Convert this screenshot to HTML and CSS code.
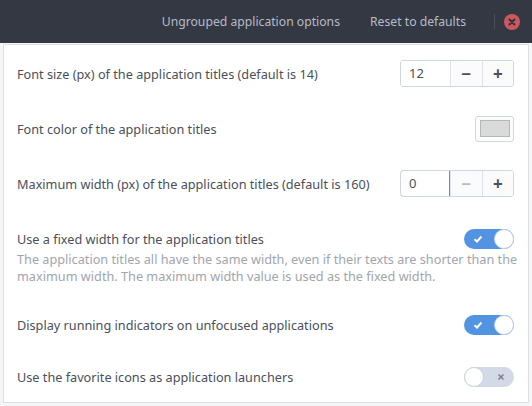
FILE: index.html
```html
<!DOCTYPE html>
<html lang="en">
<head>
    <meta charset="UTF-8">
    <title>Ungrouped application options</title>
    <link rel="stylesheet" href="styles.css">
</head>
<body>
    <div class="window">
        <header class="headerbar">
            <button class="hb-button">Ungrouped application options</button>
            <button class="hb-button">Reset to defaults</button>
            <span class="hb-separator"></span>
            <span class="hb-close">
                <svg width="16" height="16" viewBox="0 0 16 16">
                    <circle cx="8" cy="8" r="8" fill="#cc575d"/>
                    <path d="M5.5 5.5 L10.5 10.5 M10.5 5.5 L5.5 10.5" stroke="#2f343f" stroke-width="2" stroke-linecap="round"/>
                </svg>
            </span>
        </header>

        <div class="content">
            <div class="frame">
                <div class="row">
                    <div class="line">
                        <span class="title">Font size (px) of the application titles (default is 14)</span>
                        <div class="spin">
                            <span class="spin-entry">12</span>
                            <span class="spin-btn">&minus;</span>
                            <span class="spin-btn">+</span>
                        </div>
                    </div>
                </div>

                <div class="row">
                    <div class="line">
                        <span class="title">Font color of the application titles</span>
                        <span class="color-btn"><span class="swatch"></span></span>
                    </div>
                </div>

                <div class="row">
                    <div class="line">
                        <span class="title">Maximum width (px) of the application titles (default is 160)</span>
                        <div class="spin">
                            <span class="spin-entry focused">0</span>
                            <span class="spin-btn disabled">&minus;</span>
                            <span class="spin-btn">+</span>
                        </div>
                    </div>
                </div>

                <div class="row switch-row">
                    <div class="line">
                        <span class="title">Use a fixed width for the application titles</span>
                        <span class="switch on">
                            <svg class="check" width="10" height="8" viewBox="0 0 10 8">
                                <path d="M1.5 4.2 L4 6.5 L8.5 1.5" fill="none" stroke="#fff" stroke-width="2"/>
                            </svg>
                            <span class="knob"></span>
                        </span>
                    </div>
                    <p class="desc">The application titles all have the same width, even if their texts are shorter than the maximum width. The maximum width value is used as the fixed width.</p>
                </div>

                <div class="row switch-row">
                    <div class="line">
                        <span class="title">Display running indicators on unfocused applications</span>
                        <span class="switch on">
                            <svg class="check" width="10" height="8" viewBox="0 0 10 8">
                                <path d="M1.5 4.2 L4 6.5 L8.5 1.5" fill="none" stroke="#fff" stroke-width="2"/>
                            </svg>
                            <span class="knob"></span>
                        </span>
                    </div>
                </div>

                <div class="row switch-row">
                    <div class="line">
                        <span class="title">Use the favorite icons as application launchers</span>
                        <span class="switch off">
                            <span class="knob"></span>
                            <svg class="cross" width="8" height="8" viewBox="0 0 8 8">
                                <path d="M1.5 1.5 L6.5 6.5 M6.5 1.5 L1.5 6.5" stroke="#7c8394" stroke-width="1.6"/>
                            </svg>
                        </span>
                    </div>
                </div>
            </div>
        </div>
    </div>
</body>
</html>
```

FILE: styles.css
```css
body {
    margin: 0;
    padding: 0;
    font-family: "Noto Sans", "Open Sans", sans-serif;
    font-size: 12.7px;
    color: #4b4f59;
    background-color: #f5f6f7;
}
.window {
    width: 532px;
    height: 406px;
    overflow: hidden;
}
.headerbar {
    height: 43px;
    display: flex;
    align-items: center;
    justify-content: flex-end;
    padding-right: 12px;
    box-sizing: border-box;
    background-color: #343843;
}
.hb-button {
    font-family: inherit;
    font-size: 12.2px;
    color: #b6bcc8;
    background: none;
    border: none;
    padding: 6px 12px;
    margin-left: 6px;
}
.hb-separator {
    width: 1px;
    height: 15px;
    background-color: #4a4f5c;
    margin: 0 9px 0 16px;
}
.hb-close {
    display: flex;
}
.content {
    padding: 1px 3px 3px;
}
.frame {
    background-color: #fff;
    border: 1px solid #dcdfe3;
    padding-top: 1px;
    height: 356px;
}
.row {
    padding: 14px 14px 14px 13px;
}
.row.switch-row {
    padding: 16px 14px 12px 13px;
}
.line {
    display: flex;
    align-items: center;
    justify-content: space-between;
    min-height: 27px;
}
.switch-row .line {
    min-height: 24px;
}
.spin {
    display: flex;
    width: 114px;
    height: 27px;
    box-sizing: border-box;
    border: 1px solid #cfd6e6;
    border-radius: 3px;
    overflow: hidden;
}
.spin-entry {
    width: 49px;
    box-sizing: border-box;
    padding-left: 8px;
    line-height: 25px;
    font-size: 13px;
    background-color: #fff;
    color: #4b4f59;
}
.spin-entry.focused {
    border: 1px solid #5294e2;
    border-radius: 3px 0 0 3px;
    margin: -1px 0 -1px -1px;
    width: 50px;
    line-height: 25px;
    padding-left: 8px;
}
.spin-btn {
    flex: 1;
    text-align: center;
    line-height: 25px;
    font-size: 17px;
    font-weight: bold;
    color: #4b4f59;
    background-color: #fbfbfc;
    border-left: 1px solid #dde2ec;
}
.spin-btn.disabled {
    color: #b8bcc4;
    background-color: #fafbfc;
}
.color-btn {
    display: flex;
    align-items: center;
    justify-content: center;
    width: 39px;
    height: 26px;
    box-sizing: border-box;
    border: 1px solid #cfd6e6;
    border-radius: 3px;
    background-color: #fcfcfd;
}
.swatch {
    width: 28px;
    height: 15px;
    background-color: #dadada;
    border: 1px solid #b6b6b6;
}
.switch {
    position: relative;
    display: flex;
    align-items: center;
    width: 50px;
    height: 20px;
    border-radius: 10px;
    box-sizing: border-box;
}
.switch.on {
    background-color: #5294e2;
    justify-content: space-between;
}
.switch.off {
    background-color: #d3d9e6;
    justify-content: space-between;
}
.knob {
    width: 20px;
    height: 20px;
    box-sizing: border-box;
    border-radius: 50%;
    background-color: #fff;
    border: 1px solid #c6d2e6;
}
.check {
    margin-left: 9px;
}
.cross {
    margin-right: 9px;
}
.desc {
    margin: 0 -10px 0 0;
    line-height: 17px;
    color: #a1a5ad;
}
```
